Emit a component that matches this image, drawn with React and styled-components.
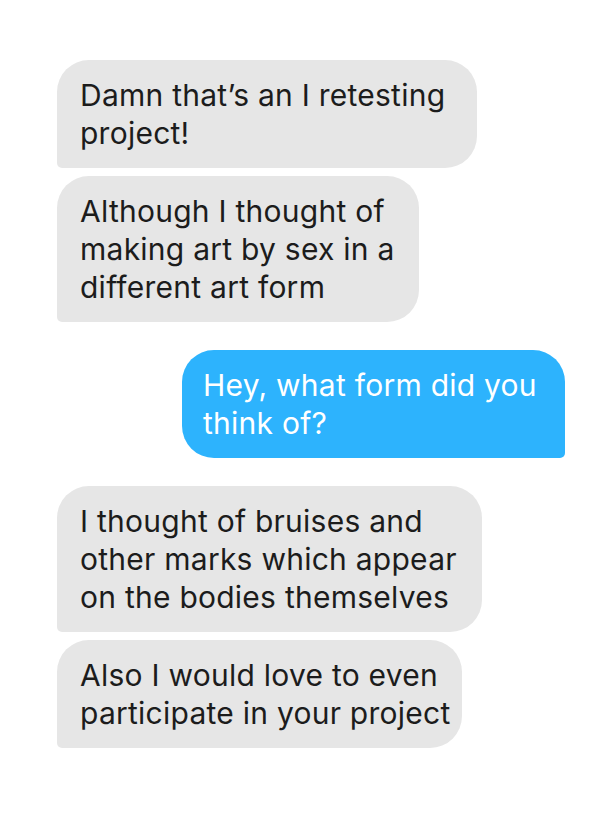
import React from "react";
import styled, { createGlobalStyle } from "styled-components";

const GlobalStyle = createGlobalStyle`
  html, body {
    margin: 0;
    padding: 0;
    background: #ffffff;
  }
  body {
    font-family: Inter, "Noto Sans", "Liberation Sans", sans-serif;
    -webkit-font-smoothing: antialiased;
  }
`;

const Thread = styled.div`
  width: 589px;
  height: 817px;
  box-sizing: border-box;
  padding: 60px 24px 0 57px;
  display: flex;
  flex-direction: column;
  gap: 28px;
`;

const Group = styled.div`
  display: flex;
  flex-direction: column;
  align-items: ${(p) => (p.$mine ? "flex-end" : "flex-start")};
  gap: 8px;
`;

const Bubble = styled.div`
  box-sizing: border-box;
  width: ${(p) => p.$w}px;
  padding: 16px 0 16px ${(p) => (p.$mine ? 21 : 23)}px;
  font-size: 30px;
  line-height: 38px;
  letter-spacing: 0.25px;
  white-space: nowrap;
  background: ${(p) => (p.$mine ? "#2db3fd" : "#e6e6e6")};
  color: ${(p) => (p.$mine ? "#ffffff" : "#1c1c1c")};
  border-radius: ${(p) => (p.$mine ? "32px 32px 5px 32px" : "32px 32px 32px 5px")};
`;

const messages = [
  {
    mine: false,
    bubbles: [
      { w: 420, lines: ["Damn that\u2019s an I retesting", "project!"] },
      { w: 362, lines: ["Although I thought of", "making art by sex in a", "different art form"] },
    ],
  },
  {
    mine: true,
    bubbles: [{ w: 383, lines: ["Hey, what form did you", "think of?"] }],
  },
  {
    mine: false,
    bubbles: [
      { w: 425, lines: ["I thought of bruises and", "other marks which appear", "on the bodies themselves"] },
      { w: 405, lines: ["Also I would love to even", "participate in your project"] },
    ],
  },
];

export default function App() {
  return (
    <>
      <GlobalStyle />
      <Thread>
        {messages.map((group, i) => (
          <Group key={i} $mine={group.mine}>
            {group.bubbles.map((b, j) => (
              <Bubble key={j} $mine={group.mine} $w={b.w}>
                {b.lines.map((line, k) => (
                  <div key={k}>{line}</div>
                ))}
              </Bubble>
            ))}
          </Group>
        ))}
      </Thread>
    </>
  );
}
